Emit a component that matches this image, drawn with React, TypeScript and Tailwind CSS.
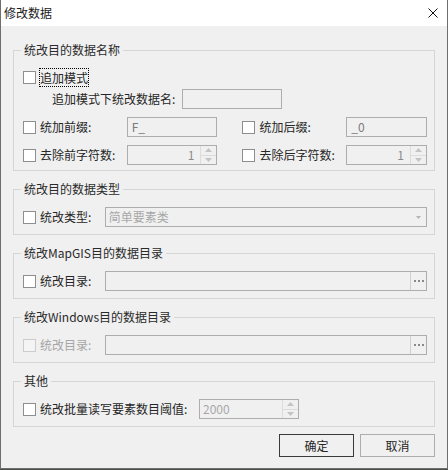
import React from "react";

function Check({ disabled }: { disabled?: boolean }) {
  return disabled ? (
    <span className="block w-[13px] h-[13px] border border-[#cccccc] bg-[#f4f4f4] shrink-0" />
  ) : (
    <span className="block w-[13px] h-[13px] border border-[#8e8e8e] bg-white shrink-0" />
  );
}

function Arrow({ up }: { up?: boolean }) {
  return (
    <svg width="7" height="4" viewBox="0 0 7 4" className="block">
      {up ? <path d="M0 4 L3.5 0 L7 4 Z" fill="#c4c4c4" /> : <path d="M0 0 L3.5 4 L7 0 Z" fill="#c4c4c4" />}
    </svg>
  );
}

function SpinButtons() {
  return (
    <div className="w-[16px] h-full flex flex-col border-l border-[#dcdcdc]">
      <div className="flex-1 flex items-center justify-center border-b border-[#dcdcdc]">
        <Arrow up />
      </div>
      <div className="flex-1 flex items-center justify-center">
        <Arrow />
      </div>
    </div>
  );
}

function Dots() {
  return (
    <div className="w-[16px] h-full flex items-center justify-center border-l border-[#d0d0d0]">
      <svg width="10" height="2" viewBox="0 0 10 2" className="block">
        <rect x="0" y="0" width="2" height="2" fill="#8a8a8a" />
        <rect x="4" y="0" width="2" height="2" fill="#8a8a8a" />
        <rect x="8" y="0" width="2" height="2" fill="#8a8a8a" />
      </svg>
    </div>
  );
}

function Group({ title, children }: { title: React.ReactNode; children: React.ReactNode }) {
  return (
    <fieldset className="border border-[#d5d5d5] px-[7px] m-0 min-w-0">
      <legend className="px-[3px] text-[12px] leading-[16px] text-[#2a2a2a]">{title}</legend>
      {children}
    </fieldset>
  );
}

export default function App() {
  return (
    <div className="w-[448px] h-[470px] bg-[#4b4f45] font-['Noto_Sans_CJK_SC','Microsoft_YaHei',sans-serif] text-[12px] leading-[16px] text-[#262626]">
      <div className="w-[448px] h-[469px] border-x border-b border-[#6e6e6e] bg-[#f0f0f0] flex flex-col">
        {/* title bar */}
        <div className="h-[26px] bg-white flex items-center justify-between pl-[3px] pr-[9px] shrink-0">
          <span className="text-[12px] text-[#1a1a1a]">修改数据</span>
          <svg width="10" height="10" viewBox="0 0 10 10" className="block">
            <path d="M0.5 0.5 L9.5 9.5 M9.5 0.5 L0.5 9.5" stroke="#111" strokeWidth="1" />
          </svg>
        </div>

        {/* body */}
        <div className="flex flex-col px-[12px] pt-[16px]">
          {/* group 1 */}
          <Group title="统改目的数据名称">
            <div className="ml-[2px] pb-[5px]">
              <div className="flex items-center h-[19px] mt-[10px]">
                <Check />
                <span className="ml-[3px] h-[19px] flex items-center border border-dotted border-black px-0">
                  追加模式
                </span>
              </div>
              <div className="flex items-center h-[20px] mt-[2px]">
                <span className="ml-[29px] w-[130px]">追加模式下统改数据名:</span>
                <div className="w-[100px] h-[20px] border border-[#adadad] bg-[#f0f0f0]" />
              </div>
              <div className="flex items-center h-[20px] mt-[8px]">
                <div className="w-[104px] flex items-center">
                  <Check />
                  <span className="ml-[4px]">统加前缀:</span>
                </div>
                <div className="w-[91px] h-[20px] border border-[#adadad] bg-[#f0f0f0] flex items-center pl-[4px] text-[#7a7a7a]">
                  F_
                </div>
                <div className="ml-[25px] w-[104px] flex items-center">
                  <Check />
                  <span className="ml-[4px]">统加后缀:</span>
                </div>
                <div className="w-[81px] h-[20px] border border-[#adadad] bg-[#f0f0f0] flex items-center pl-[4px] text-[#7a7a7a]">
                  _0
                </div>
              </div>
              <div className="flex items-center h-[20px] mt-[8px]">
                <div className="w-[104px] flex items-center">
                  <Check />
                  <span className="ml-[4px]">去除前字符数:</span>
                </div>
                <div className="w-[91px] h-[20px] border border-[#adadad] bg-[#f0f0f0] flex items-center">
                  <span className="flex-1 text-right pr-[6px] text-[#8a8a8a]">1</span>
                  <SpinButtons />
                </div>
                <div className="ml-[25px] w-[104px] flex items-center">
                  <Check />
                  <span className="ml-[4px]">去除后字符数:</span>
                </div>
                <div className="w-[81px] h-[20px] border border-[#adadad] bg-[#f0f0f0] flex items-center">
                  <span className="flex-1 text-right pr-[6px] text-[#8a8a8a]">1</span>
                  <SpinButtons />
                </div>
              </div>
            </div>
          </Group>

          {/* group 2 */}
          <div className="mt-[10px]">
            <Group title="统改目的数据类型">
              <div className="ml-[2px] pb-[7px]">
                <div className="flex items-center h-[20px] mt-[10px]">
                  <div className="w-[82px] flex items-center">
                    <Check />
                    <span className="ml-[4px]">统改类型:</span>
                  </div>
                  <div className="w-[323px] h-[20px] border border-[#adadad] bg-[#f0f0f0] flex items-center">
                    <span className="flex-1 pl-[3px] text-[#a8a8a8]">简单要素类</span>
                    <div className="w-[16px] flex items-center justify-center">
                      <svg width="5" height="3" viewBox="0 0 5 3" className="block">
                        <path d="M0 0 L2.5 3 L5 0 Z" fill="#b4b4b4" />
                      </svg>
                    </div>
                  </div>
                </div>
              </div>
            </Group>
          </div>

          {/* group 3 */}
          <div className="mt-[10px]">
            <Group title="统改MapGIS目的数据目录">
              <div className="ml-[2px] pb-[7px]">
                <div className="flex items-center h-[20px] mt-[10px]">
                  <div className="w-[82px] flex items-center">
                    <Check />
                    <span className="ml-[4px]">统改目录:</span>
                  </div>
                  <div className="w-[323px] h-[20px] border border-[#adadad] bg-[#f0f0f0] flex items-center">
                    <span className="flex-1" />
                    <Dots />
                  </div>
                </div>
              </div>
            </Group>
          </div>

          {/* group 4 */}
          <div className="mt-[10px]">
            <Group title="统改Windows目的数据目录">
              <div className="ml-[2px] pb-[7px]">
                <div className="flex items-center h-[20px] mt-[10px]">
                  <div className="w-[82px] flex items-center">
                    <Check disabled />
                    <span className="ml-[4px] text-[#a6a6a6]">统改目录:</span>
                  </div>
                  <div className="w-[323px] h-[20px] border border-[#adadad] bg-[#f0f0f0] flex items-center">
                    <span className="flex-1" />
                    <Dots />
                  </div>
                </div>
              </div>
            </Group>
          </div>

          {/* group 5 */}
          <div className="mt-[10px]">
            <Group title="其他">
              <div className="ml-[2px] pb-[7px]">
                <div className="flex items-center h-[20px] mt-[10px]">
                  <div className="w-[176px] flex items-center">
                    <Check />
                    <span className="ml-[4px]">统改批量读写要素数目阈值:</span>
                  </div>
                  <div className="w-[100px] h-[20px] border border-[#adadad] bg-[#f0f0f0] flex items-center">
                    <span className="flex-1 pl-[3px] text-[#a8a8a8]">2000</span>
                    <SpinButtons />
                  </div>
                </div>
              </div>
            </Group>
          </div>

          {/* buttons */}
          <div className="flex justify-end gap-[6px] mt-[7px]">
            <button className="w-[75px] h-[23px] border border-[#3a3a3a] bg-[#f0f0f0] text-[12px] text-[#262626] flex items-center justify-center">
              确定
            </button>
            <button className="w-[75px] h-[23px] border border-[#adadad] bg-[#f0f0f0] text-[12px] text-[#262626] flex items-center justify-center">
              取消
            </button>
          </div>
        </div>
      </div>
    </div>
  );
}
